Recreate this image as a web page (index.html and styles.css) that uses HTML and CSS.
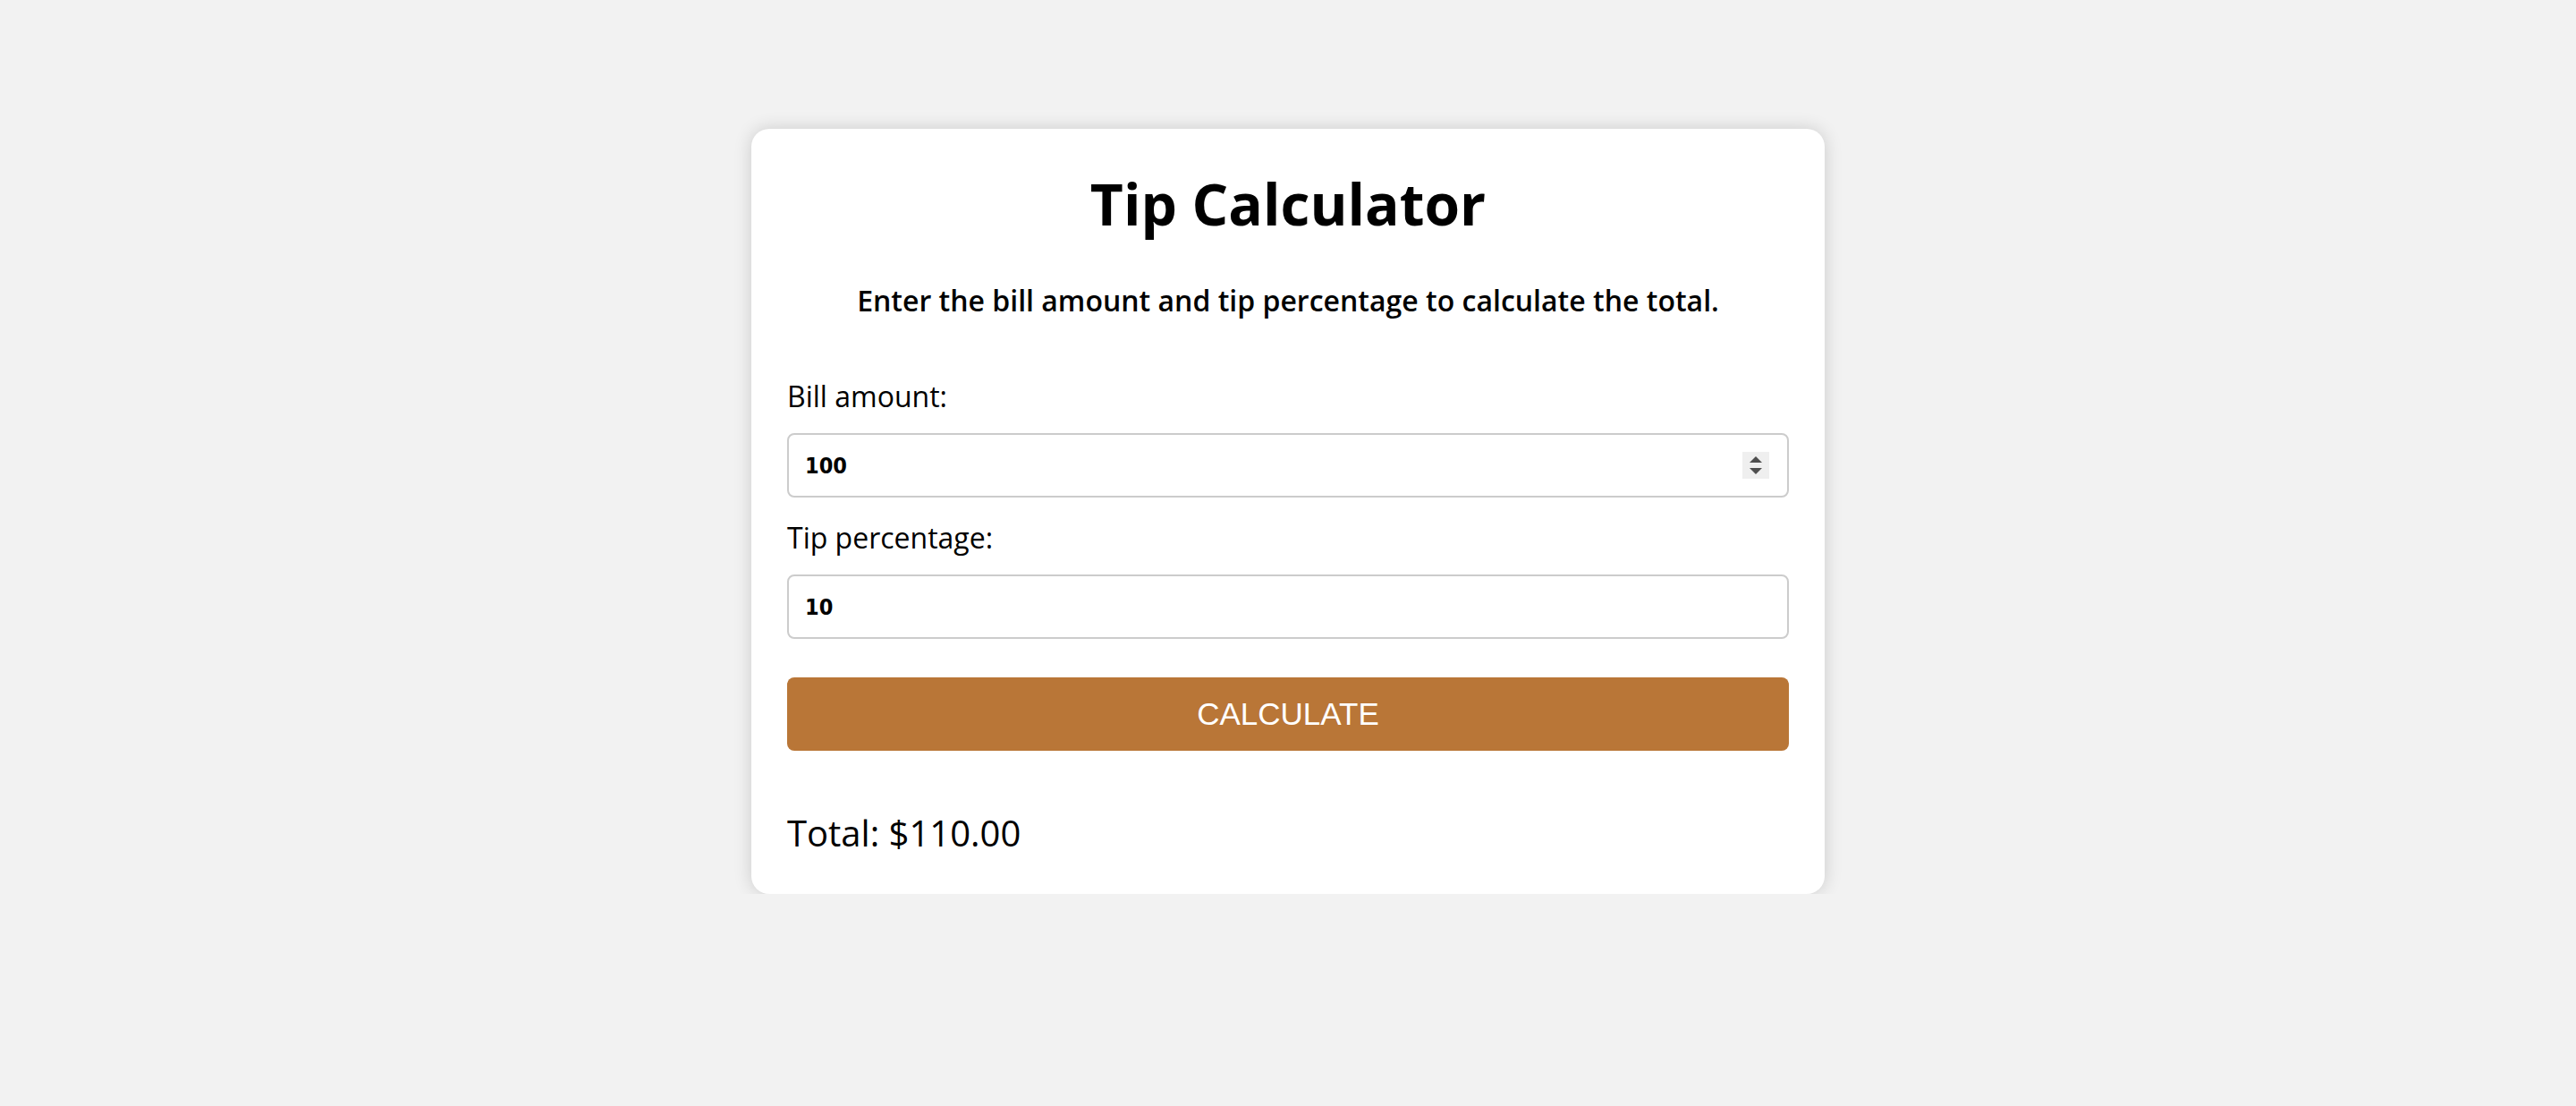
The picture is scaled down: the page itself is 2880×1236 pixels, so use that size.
FILE: index.html
```html
<!DOCTYPE html>
<html lang="en">
<head>
<meta charset="utf-8">
<title>Tip Calculator</title>
<link rel="stylesheet" href="styles.css">
</head>
<body>
<main class="card">
  <h1 class="title">Tip Calculator</h1>
  <p class="subtitle">Enter the bill amount and tip percentage to calculate the total.</p>
  <form class="form">
    <label class="label" for="bill">Bill amount:</label>
    <div class="field">
      <input class="input" id="bill" type="text" value="100">
      <span class="spinner">
        <svg width="30" height="30" viewBox="0 0 30 30">
          <polygon points="8,12 15,5 22,12" fill="#4f4f4f"/>
          <polygon points="8,18 22,18 15,25" fill="#4f4f4f"/>
        </svg>
      </span>
    </div>
    <label class="label" for="tip">Tip percentage:</label>
    <div class="field">
      <input class="input" id="tip" type="text" value="10">
    </div>
    <button class="button" type="button">Calculate</button>
  </form>
  <p class="total">Total: $110.00</p>
</main>
</body>
</html>
```

FILE: styles.css
```css
html, body {
  margin: 0;
  padding: 0;
}

body {
  background: #f2f2f2;
  font-family: "Open Sans", "Liberation Sans", sans-serif;
  color: #000;
  padding-top: 144px;
}

.card {
  box-sizing: border-box;
  width: 1200px;
  margin: 0 auto;
  padding: 40px 40px 41px;
  background: #ffffff;
  border-radius: 20px;
  box-shadow: 0 0 20px rgba(0, 0, 0, 0.16);
}

.title {
  margin: 0 0 43px;
  font-size: 64px;
  font-weight: 700;
  text-align: center;
  line-height: normal;
}

.subtitle {
  margin: 0 0 64px;
  font-size: 32px;
  font-weight: 600;
  text-align: center;
  line-height: normal;
}

.form {
  display: flex;
  flex-direction: column;
  margin: 0;
}

.label {
  display: block;
  font-size: 32px;
  line-height: normal;
  margin: 0 0 20px;
}

.field {
  box-sizing: border-box;
  height: 72px;
  display: flex;
  align-items: center;
  border: 2px solid #cccccc;
  border-radius: 8px;
  padding: 0 20px 0 18px;
  margin-bottom: 23px;
  background: #fff;
}

.input {
  flex: 1;
  min-width: 0;
  border: none;
  outline: none;
  background: transparent;
  padding: 0;
  margin: 0;
  font-family: "Liberation Sans Narrow", "DejaVu Sans Condensed", "Liberation Sans", sans-serif;
  font-weight: 700;
  font-size: 25px;
  color: #000;
}

.spinner {
  display: flex;
  width: 30px;
  height: 30px;
  background: #efefef;
}

.button {
  margin-top: 20px;
  height: 82px;
  border: none;
  border-radius: 8px;
  background: #b97637;
  color: #ffffff;
  font-family: "Liberation Sans", Arial, sans-serif;
  font-size: 35px;
  text-transform: uppercase;
  padding: 0;
}

.total {
  margin: 64px 0 0;
  font-size: 40px;
  line-height: normal;
}
```
